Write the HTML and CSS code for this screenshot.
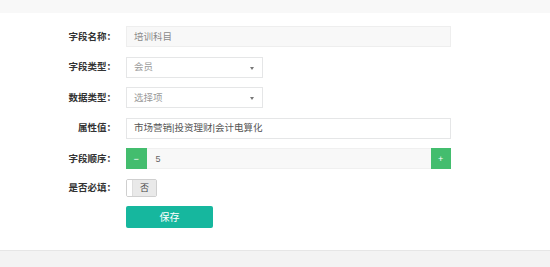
FILE: index.html
```html
<!DOCTYPE html>
<html lang="zh-CN">
<head>
<meta charset="utf-8">
<title>字段编辑</title>
<link rel="stylesheet" href="styles.css">
</head>
<body>
<div class="topbar"></div>
<main class="main">
  <form class="form">
    <div class="row">
      <label class="label">字段名称：</label>
      <div class="control wide readonly"><span class="val muted">培训科目</span></div>
    </div>
    <div class="row">
      <label class="label">字段类型：</label>
      <div class="control narrow select"><span class="val light">会员</span><span class="caret"></span></div>
    </div>
    <div class="row">
      <label class="label">数据类型：</label>
      <div class="control narrow select"><span class="val light">选择项</span><span class="caret"></span></div>
    </div>
    <div class="row">
      <label class="label">属性值：</label>
      <div class="control wide"><span class="val dark">市场营销|投资理财|会计电算化</span></div>
    </div>
    <div class="row">
      <label class="label">字段顺序：</label>
      <div class="spinner">
        <span class="spin-btn">−</span>
        <span class="spin-val">5</span>
        <span class="spin-btn">+</span>
      </div>
    </div>
    <div class="row row-switch">
      <label class="label">是否必填：</label>
      <div class="switch"><span class="switch-handle"></span><span class="switch-off">否</span></div>
    </div>
    <div class="row">
      <span class="label"></span>
      <button type="button" class="save">保存</button>
    </div>
  </form>
</main>
<footer class="footer"></footer>
</body>
</html>
```
FILE: styles.css
```css
* { box-sizing: border-box; }
html, body { margin: 0; padding: 0; background: #fff; }
body {
  width: 550px;
  height: 267px;
  overflow: hidden;
  font-family: "Liberation Sans", "Noto Sans CJK SC", sans-serif;
  color: #333;
}
.topbar { height: 13px; background: #f8f8f8; }
.main { height: 237px; padding-top: 13px; }
.form { display: flex; flex-direction: column; }
.row {
  display: flex;
  align-items: center;
  height: 21px;
  margin-bottom: 9.5px;
}
.row-switch { height: 18px; }
.label {
  width: 116px;
  margin-right: 10px;
  text-align: right;
  font-size: 9.5px;
  font-weight: bold;
  color: #333;
  line-height: 1;
}
.control {
  position: relative;
  height: 21px;
  border: 1px solid #e5e6e7;
  background: #fff;
  display: flex;
  align-items: center;
  padding: 0 7px;
  font-size: 9.5px;
}
.wide { width: 325px; }
.narrow { width: 137px; }
.readonly { background: #f8f8f8; border-color: #eeeeee; }
.val { line-height: 1; }
.muted { color: #8a8a8a; }
.light { color: #9a9a9a; }
.dark { color: #555; }
.caret {
  position: absolute;
  right: 8px;
  top: 9px;
  width: 0;
  height: 0;
  border-left: 2.5px solid transparent;
  border-right: 2.5px solid transparent;
  border-top: 3px solid #777;
}
.spinner {
  display: flex;
  width: 325px;
  height: 21px;
}
.spin-btn {
  width: 20.5px;
  height: 21px;
  background: #43bd6e;
  color: #fff;
  font-size: 9px;
  display: flex;
  align-items: center;
  justify-content: center;
}
.spin-val {
  flex: 1;
  background: #f8f8f8;
  border-top: 1px solid #f0f0f0;
  border-bottom: 1px solid #f0f0f0;
  display: flex;
  align-items: center;
  padding-left: 9px;
  font-size: 9px;
  color: #666;
}
.switch {
  display: flex;
  width: 31px;
  height: 18px;
  border: 1px solid #cfcfcf;
  border-radius: 2px;
  overflow: hidden;
}
.switch-handle { width: 6px; background: #fff; border-right: 1px solid #ddd; }
.switch-off {
  flex: 1;
  background: #e9e9e9;
  display: flex;
  align-items: center;
  justify-content: center;
  font-size: 9px;
  color: #444;
}
.save {
  width: 87px;
  height: 22px;
  border: 0;
  border-radius: 2px;
  background: #16b79e;
  color: #fff;
  font-family: inherit;
  font-size: 10px;
  padding: 0;
}
.footer {
  height: 17px;
  background: #f3f3f3;
  border-top: 1px solid #e6e6e6;
}
```
